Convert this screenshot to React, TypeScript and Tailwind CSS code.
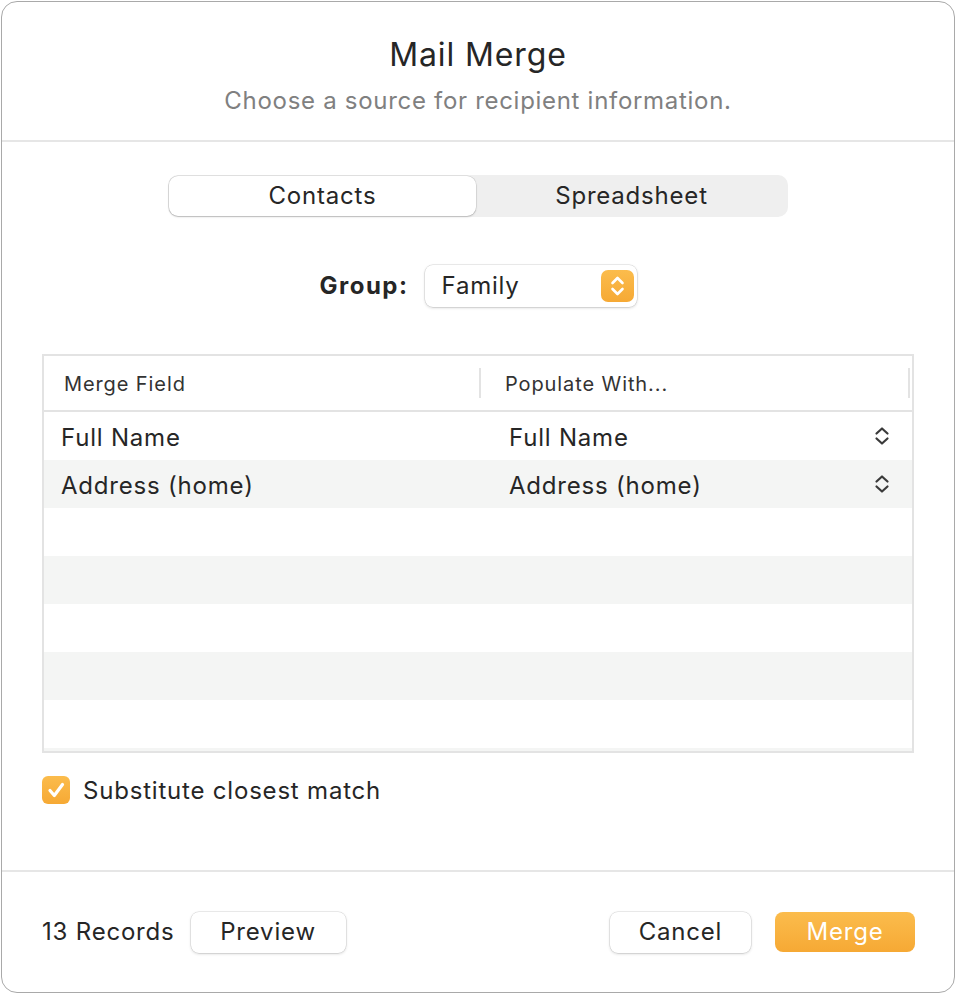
import React from 'react';

type Row = { field: string; value: string };

const rows: Row[] = [
    { field: 'Full Name', value: 'Full Name' },
    { field: 'Address (home)', value: 'Address (home)' },
];

// body text: 24px with the slightly open tracking of the system font
const body = 'text-[24px] leading-[30px] tracking-[0.8px]';

// small up/down chevrons used in the "Populate With" cells
const RowStepper = () => (
    <svg width="16" height="24" viewBox="0 0 16 24" fill="none" stroke="#3a3a3a" strokeWidth="2.2" strokeLinecap="round" strokeLinejoin="round">
        <path d="M2.5 9.5 L8 4.5 L13.5 9.5" />
        <path d="M2.5 14.5 L8 19.5 L13.5 14.5" />
    </svg>
);

const PopupStepper = () => (
    <div className="w-[33px] h-[32px] rounded-[7px] bg-gradient-to-b from-[#fbbc4c] to-[#f6a934] flex items-center justify-center">
        <svg width="33" height="32" viewBox="0 0 33 32" fill="none" stroke="#fff" strokeWidth="2.6" strokeLinecap="round" strokeLinejoin="round">
            <path d="M11.5 13 L16.5 8 L21.5 13" />
            <path d="M11.5 19 L16.5 24 L21.5 19" />
        </svg>
    </div>
);

export default function App() {
    // 7 full rows + one clipped row at the bottom of the list
    const tableRows: (Row | null)[] = Array.from({ length: 8 }, (_, i) => rows[i] ?? null);

    return (
        <div className="w-[956px] h-[994px] bg-white p-px font-[Inter,'Liberation_Sans',sans-serif] text-[#262626]">
            <div className="h-full w-[954px] rounded-[16px] border border-[#a9a9a9] flex flex-col overflow-hidden">
                {/* Title */}
                <header className="flex flex-col items-center pt-[35px] pb-[24px] border-b-2 border-[#e6e6e6]">
                    <h1 className="text-[32px] leading-[36px] tracking-[0.9px]">Mail Merge</h1>
                    <p className="mt-[13px] text-[24px] leading-[30px] tracking-[0.7px] text-[#808080]">Choose a source for recipient information.</p>
                </header>

                {/* Body */}
                <div className="flex flex-col pt-[33px] pb-[66px]">
                    {/* Source tabs */}
                    <div className="self-center w-[620px] h-[42px] rounded-[10px] bg-[#efefef] p-px flex">
                        <div className={`w-[307px] h-full rounded-[9px] bg-white shadow-[0_0_0_0.5px_rgba(0,0,0,0.12),0_1px_2px_rgba(0,0,0,0.18)] flex items-center justify-center ${body}`}>
                            Contacts
                        </div>
                        <div className={`flex-1 flex items-center justify-center ${body}`}>Spreadsheet</div>
                    </div>

                    {/* Group picker */}
                    <div className="mt-[48px] self-center flex items-center gap-[16px]">
                        <span className="text-[24px] leading-[30px] tracking-[1.5px] font-bold">Group:</span>
                        <div className="w-[212px] h-[42px] rounded-[8px] bg-white shadow-[0_0_0_0.5px_rgba(0,0,0,0.14),0_1px_3px_rgba(0,0,0,0.16)] flex items-center justify-between pl-[17px] pr-[3px]">
                            <span className={body}>Family</span>
                            <PopupStepper />
                        </div>
                    </div>

                    {/* Field table */}
                    <div className="mt-[47px] mx-[40px] h-[399px] border-2 border-[#e3e3e3] flex flex-col">
                        <div className="h-[56px] shrink-0 border-b-2 border-[#e3e3e3] flex items-center text-[20px] tracking-[0.9px] text-[#333]">
                            <div className="w-[435px] pl-[20px] pt-[2px]">Merge Field</div>
                            <div className="w-[2px] h-[30px] bg-[#e3e3e3]" />
                            <div className="flex-1 pl-[24px] pt-[2px]">Populate With...</div>
                            <div className="w-[2px] h-[30px] bg-[#e3e3e3] mr-[2px]" />
                        </div>
                        <div className="flex-1 overflow-hidden">
                            {tableRows.map((row, i) => (
                                <div key={i} className={`h-[48px] flex items-center ${body} ${i % 2 === 1 ? 'bg-[#f4f5f4]' : 'bg-white'}`}>
                                    {row && (
                                        <>
                                            <div className="w-[448px] pl-[17px] pt-[3px]">{row.field}</div>
                                            <div className="flex-1 pl-[17px] pt-[3px]">{row.value}</div>
                                            <div className="pr-[22px] flex items-center">
                                                <RowStepper />
                                            </div>
                                        </>
                                    )}
                                </div>
                            ))}
                        </div>
                    </div>

                    {/* Options */}
                    <label className="mt-[23px] ml-[40px] h-[28px] flex items-center gap-[13px]">
                        <span className="w-[28px] h-[28px] rounded-[6px] bg-gradient-to-b from-[#fbbc4c] to-[#f6a934] flex items-center justify-center">
                            <svg width="28" height="28" viewBox="0 0 28 28" fill="none" stroke="#fff" strokeWidth="3.2" strokeLinecap="round" strokeLinejoin="round">
                                <path d="M8 14.5 L12.3 19.5 L20.5 8.5" />
                            </svg>
                        </span>
                        <span className={`${body} pt-[2px]`}>Substitute closest match</span>
                    </label>
                </div>

                {/* Footer */}
                <footer className="flex-1 border-t-2 border-[#e6e6e6] flex items-center pl-[40px] pr-[39px]">
                    <span className={body}>13 Records</span>
                    <button className={`ml-[16px] w-[155px] h-[41px] rounded-[8px] bg-white shadow-[0_0_0_0.5px_rgba(0,0,0,0.14),0_1px_3px_rgba(0,0,0,0.16)] ${body}`}>
                        Preview
                    </button>
                    <div className="ml-auto flex items-center gap-[24px]">
                        <button className={`w-[141px] h-[41px] rounded-[8px] bg-white shadow-[0_0_0_0.5px_rgba(0,0,0,0.14),0_1px_3px_rgba(0,0,0,0.16)] ${body}`}>
                            Cancel
                        </button>
                        <button className={`w-[140px] h-[40px] rounded-[8px] bg-gradient-to-b from-[#fbbc4c] to-[#f6a934] text-white ${body}`}>
                            Merge
                        </button>
                    </div>
                </footer>
            </div>
        </div>
    );
}
